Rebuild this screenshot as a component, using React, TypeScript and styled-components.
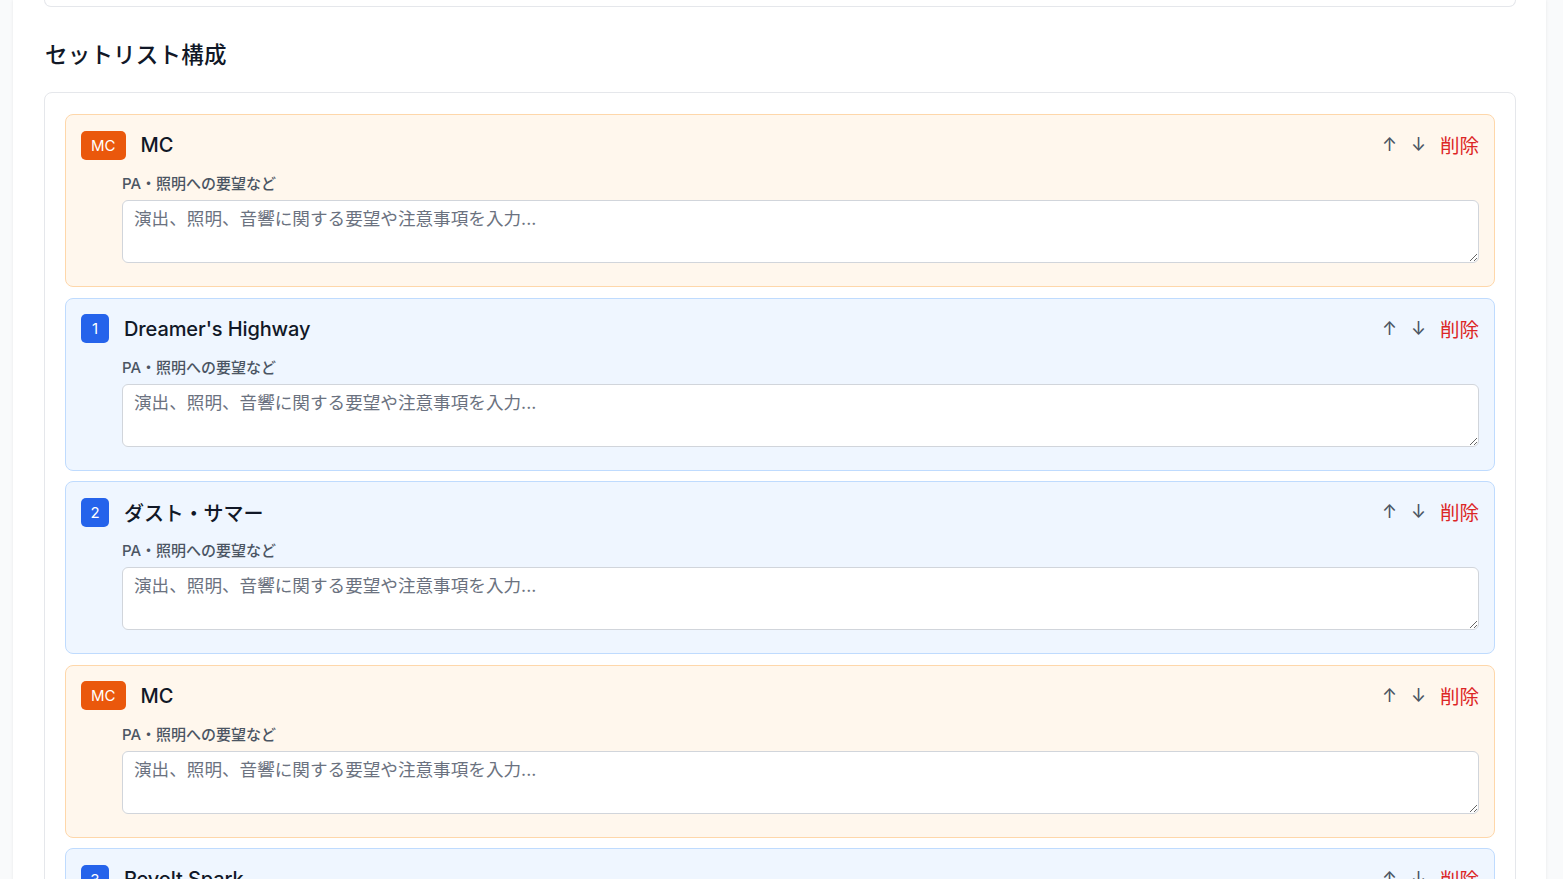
import React from "react";
import styled, { createGlobalStyle } from "styled-components";

const GlobalStyle = createGlobalStyle`
  html, body {
    margin: 0;
    padding: 0;
    background: #f9fafb;
    font-family: Inter, "Noto Sans CJK JP", sans-serif;
    color: #111827;
    overflow: hidden;
  }
  * { box-sizing: border-box; }
`;

const Page = styled.div`
  min-height: 879px;
  display: flex;
`;

const Main = styled.main`
  margin-left: 13px;
  width: 1533px;
  background: #ffffff;
  box-shadow: 0 0 3px rgba(0, 0, 0, 0.08);
  padding: 0 30px 0 31px;
  min-height: 879px;
`;

const ClippedCard = styled.div`
  height: 7px;
  border: 1px solid #e5e7eb;
  border-top: none;
  border-radius: 0 0 8px 8px;
  background: #ffffff;
`;

const Heading = styled.h2`
  margin: 32px 0 21px 1px;
  font-size: 22.5px;
  line-height: 32px;
  font-weight: 500;
  color: #111827;
  letter-spacing: 0.2px;
`;

const Card = styled.section`
  border: 1px solid #e5e7eb;
  border-radius: 8px;
  background: #ffffff;
  padding: 21px 20px;
  display: flex;
  flex-direction: column;
  gap: 10.5px;
`;

const Item = styled.div<{ $mc: boolean }>`
  border: 1px solid ${(p) => (p.$mc ? "#fed7aa" : "#bfdbfe")};
  background: ${(p) => (p.$mc ? "#fff7ed" : "#eff6ff")};
  border-radius: 8px;
  padding: 15px 15px 23px 15px;
`;

const Header = styled.div`
  display: flex;
  align-items: center;
  height: 30px;
`;

const Badge = styled.span<{ $mc: boolean }>`
  display: inline-flex;
  align-items: center;
  justify-content: center;
  height: 29px;
  min-width: 28px;
  padding: 0 ${(p) => (p.$mc ? "10px" : "9px")};
  border-radius: 5px;
  background: ${(p) => (p.$mc ? "#ea580c" : "#2563eb")};
  color: #ffffff;
  font-size: 15px;
  font-weight: 400;
`;

const Title = styled.span`
  margin-left: 15px;
  font-size: 20px;
  font-weight: 500;
  color: #111827;
  flex: 1;
  letter-spacing: -0.1px;
`;

const Controls = styled.div`
  display: flex;
  align-items: center;
  gap: 10px;
`;

const ArrowButton = styled.button`
  border: none;
  background: none;
  padding: 0 2px;
  font-family: Inter, "Noto Sans CJK JP", sans-serif;
  font-size: 18px;
  line-height: 24px;
  color: #4b5563;
  cursor: pointer;
`;

const DeleteButton = styled.button`
  border: none;
  background: none;
  padding: 0;
  margin-left: 2px;
  font-family: "Noto Sans CJK JP", sans-serif;
  font-size: 19.5px;
  line-height: 26px;
  color: #dc2626;
  cursor: pointer;
`;

const Body = styled.div`
  margin-left: 41px;
  margin-top: 13px;
`;

const Label = styled.label`
  display: block;
  font-size: 15px;
  line-height: 22px;
  font-weight: 500;
  color: #4b5563;
  margin-bottom: 5px;
`;

const TextArea = styled.textarea`
  display: block;
  width: 100%;
  height: 63px;
  border: 1px solid #d1d5db;
  border-radius: 6px;
  background: #ffffff;
  padding: 5px 11px;
  font-family: Inter, "Noto Sans CJK JP", sans-serif;
  font-size: 17.6px;
  line-height: 26px;
  color: #111827;
  resize: vertical;
  &::placeholder {
    color: #6b7280;
  }
`;

type Entry = { mc: boolean; label: string; title: string };

const entries: Entry[] = [
  { mc: true, label: "MC", title: "MC" },
  { mc: false, label: "1", title: "Dreamer's Highway" },
  { mc: false, label: "2", title: "ダスト・サマー" },
  { mc: true, label: "MC", title: "MC" },
  { mc: false, label: "3", title: "Revolt Spark" },
];

export default function App() {
  return (
    <Page>
      <GlobalStyle />
      <Main>
        <ClippedCard />
        <Heading>セットリスト構成</Heading>
        <Card>
          {entries.map((e, i) => (
            <Item key={i} $mc={e.mc}>
              <Header>
                <Badge $mc={e.mc}>{e.label}</Badge>
                <Title>{e.title}</Title>
                <Controls>
                  <ArrowButton type="button">↑</ArrowButton>
                  <ArrowButton type="button">↓</ArrowButton>
                  <DeleteButton type="button">削除</DeleteButton>
                </Controls>
              </Header>
              <Body>
                <Label>PA・照明への要望など</Label>
                <TextArea placeholder="演出、照明、音響に関する要望や注意事項を入力..." />
              </Body>
            </Item>
          ))}
        </Card>
      </Main>
    </Page>
  );
}
